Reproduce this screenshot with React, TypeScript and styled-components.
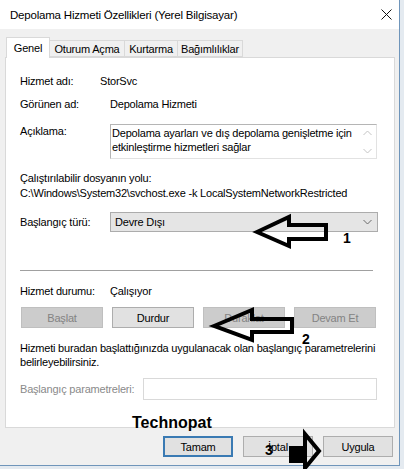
import React from "react";
import styled, { createGlobalStyle } from "styled-components";

const GlobalStyle = createGlobalStyle`
  html, body { margin: 0; padding: 0; background: #e4eaf0; }
  body {
    font-family: "Liberation Sans", Arial, sans-serif;
    font-size: 11px;
    letter-spacing: -0.2px;
    color: #000;
    white-space: nowrap;
  }
`;

const Stage = styled.div`
  position: relative;
  width: 404px;
  height: 469px;
  overflow: hidden;
`;

const Window = styled.div`
  width: 399px;
  height: 465px;
  background: #f0f0f0;
  border-right: 1px solid #6f95ba;
  border-bottom: 1px solid #6f95ba;
  display: flex;
  flex-direction: column;
`;

const TitleBar = styled.div`
  height: 29px;
  background: #fff;
  display: flex;
  align-items: center;
  justify-content: space-between;
  padding: 0 7px 0 10px;
`;

const Title = styled.span`
  font-size: 11.5px;
  margin-top: 1px;
`;

const Body = styled.div`
  padding: 8px 4px 0 5px;
  display: flex;
  flex-direction: column;
`;

const TabStrip = styled.div`
  display: flex;
  align-items: flex-end;
  height: 20px;
  margin-left: 1px;
  position: relative;
  z-index: 1;
`;

const Tab = styled.div<{ $w: number; $active?: boolean }>`
  width: ${(p) => p.$w}px;
  height: ${(p) => (p.$active ? 21 : 17)}px;
  margin-bottom: ${(p) => (p.$active ? -1 : 0)}px;
  box-sizing: border-box;
  border: 1px solid #d9d9d9;
  border-bottom: ${(p) => (p.$active ? "none" : "1px solid #d9d9d9")};
  margin-left: ${(p) => (p.$active ? 0 : -1)}px;
  background: ${(p) => (p.$active ? "#fff" : "#f0f0f0")};
  display: flex;
  justify-content: center;
  align-items: ${(p) => (p.$active ? "flex-start" : "center")};
  padding-top: ${(p) => (p.$active ? 3 : 0)}px;
  line-height: 14px;
`;

const Panel = styled.div`
  width: 390px;
  height: 371px;
  box-sizing: border-box;
  border: 1px solid #d9d9d9;
  background: #fff;
  padding: 13px 0 0 14px;
  display: flex;
  flex-direction: column;
`;

const Row = styled.div<{ $h: number; $mt: number }>`
  display: flex;
  align-items: center;
  height: ${(p) => p.$h}px;
  margin-top: ${(p) => p.$mt}px;
`;

const TopRow = styled.div<{ $mt: number }>`
  display: flex;
  align-items: flex-start;
  margin-top: ${(p) => p.$mt}px;
`;

const Label = styled.span<{ $w: number; $muted?: boolean; $pt?: number }>`
  width: ${(p) => p.$w}px;
  flex: none;
  color: ${(p) => (p.$muted ? "#8a8a8a" : "#000")};
  padding-top: ${(p) => p.$pt ?? 0}px;
  line-height: 14px;
`;

const Value = styled.span<{ $inset?: number }>`
  padding-left: ${(p) => p.$inset ?? 0}px;
`;

const DescBox = styled.div`
  width: 267px;
  height: 35px;
  box-sizing: border-box;
  border: 1px solid #e2e2e2;
  border-top-color: #b5b5b5;
  border-left-color: #b5b5b5;
  display: flex;
`;

const DescText = styled.div`
  flex: 1;
  padding: 1px 0 0 1px;
  line-height: 14px;
`;

const ScrollCol = styled.div`
  width: 17px;
  display: flex;
  flex-direction: column;
  justify-content: space-between;
  align-items: center;
  padding: 5px 0 4px;
`;

const Para = styled.div<{ $mt: number }>`
  margin-top: ${(p) => p.$mt}px;
  line-height: ${(p) => (p.$mt > 12 ? 14 : 15)}px;
`;

const Select = styled.div`
  width: 268px;
  height: 20px;
  box-sizing: border-box;
  background: #e5e5e5;
  border: 1px solid #acacac;
  display: flex;
  align-items: center;
  justify-content: space-between;
  padding: 0 5px 0 4px;
`;

const Separator = styled.div`
  width: 353px;
  height: 1px;
  background: #a0a0a0;
  margin-top: 38px;
`;

const ButtonGrid = styled.div`
  display: grid;
  grid-template-columns: repeat(4, 82px);
  column-gap: 9px;
  margin: 8px 0 0 1px;
`;

const Button = styled.div<{ $disabled?: boolean; $w?: number; $default?: boolean }>`
  height: 21px;
  width: ${(p) => (p.$w ? `${p.$w}px` : "auto")};
  box-sizing: border-box;
  display: flex;
  align-items: center;
  justify-content: center;
  background: ${(p) => (p.$disabled ? "#cccccc" : "#e1e1e1")};
  border: ${(p) =>
    p.$default ? "2px solid #3a7ab3" : p.$disabled ? "1px solid #bfbfbf" : "1px solid #adadad"};
  color: ${(p) => (p.$disabled ? "#838383" : "#000")};
`;

const Input = styled.div`
  width: 234px;
  height: 22px;
  box-sizing: border-box;
  border: 1px solid #d9d9d9;
  background: #fff;
`;

const Footer = styled.div`
  display: flex;
  justify-content: flex-end;
  gap: 10px;
  margin-top: 8px;
  padding-right: 2px;
`;

const Overlay = styled.svg`
  position: absolute;
  left: 0;
  top: 0;
  pointer-events: none;
`;

const Mark = styled.span<{ $x: number; $y: number; $size: number }>`
  position: absolute;
  left: ${(p) => p.$x}px;
  top: ${(p) => p.$y}px;
  font-family: "Liberation Sans", Arial, sans-serif;
  font-weight: bold;
  font-size: ${(p) => p.$size}px;
  letter-spacing: 0;
  line-height: 1;
  color: #000;
`;

const Chevron = ({ up }: { up?: boolean }) => (
  <svg width="9" height="6" viewBox="0 0 9 6">
    <path
      d={up ? "M0.5 5 L4.5 1 L8.5 5" : "M0.5 1 L4.5 5 L8.5 1"}
      fill="none"
      stroke="#c4c4c4"
      strokeWidth="1"
    />
  </svg>
);

export default function App() {
  return (
    <>
      <GlobalStyle />
      <Stage>
        <Window>
          <TitleBar>
            <Title>Depolama Hizmeti Özellikleri (Yerel Bilgisayar)</Title>
            <svg width="11" height="11" viewBox="0 0 11 11">
              <path d="M0.5 0.5 L10.5 10.5 M10.5 0.5 L0.5 10.5" stroke="#111" strokeWidth="1" />
            </svg>
          </TitleBar>
          <Body>
            <TabStrip>
              <Tab $w={44} $active>Genel</Tab>
              <Tab $w={76}>Oturum Açma</Tab>
              <Tab $w={54}>Kurtarma</Tab>
              <Tab $w={66}>Bağımlılıklar</Tab>
            </TabStrip>
            <Panel>
              <Row $h={20} $mt={0}>
                <Label $w={80}>Hizmet adı:</Label>
                <Value>StorSvc</Value>
              </Row>
              <Row $h={20} $mt={3}>
                <Label $w={80}>Görünen ad:</Label>
                <Value $inset={10}>Depolama Hizmeti</Value>
              </Row>
              <TopRow $mt={10}>
                <Label $w={90} $pt={0}>Açıklama:</Label>
                <DescBox>
                  <DescText>
                    Depolama ayarları ve dış depolama genişletme için
                    <br />
                    etkinleştirme hizmetleri sağlar
                  </DescText>
                  <ScrollCol>
                    <Chevron up />
                    <Chevron />
                  </ScrollCol>
                </DescBox>
              </TopRow>
              <Para $mt={12}>
                Çalıştırılabilir dosyanın yolu:
                <br />
                C:\Windows\System32\svchost.exe -k LocalSystemNetworkRestricted
              </Para>
              <Row $h={20} $mt={11}>
                <Label $w={90}>Başlangıç türü:</Label>
                <Select>
                  <span>Devre Dışı</span>
                  <svg width="9" height="6" viewBox="0 0 9 6">
                    <path d="M0.5 1 L4.5 5 L8.5 1" fill="none" stroke="#6a6a6a" strokeWidth="1" />
                  </svg>
                </Select>
              </Row>
              <Separator />
              <Row $h={16} $mt={12}>
                <Label $w={90}>Hizmet durumu:</Label>
                <Value>Çalışıyor</Value>
              </Row>
              <ButtonGrid>
                <Button $disabled>Başlat</Button>
                <Button>Durdur</Button>
                <Button $disabled>Duraklat</Button>
                <Button $disabled>Devam Et</Button>
              </ButtonGrid>
              <Para $mt={13}>
                Hizmeti buradan başlattığınızda uygulanacak olan başlangıç parametrelerini
                <br />
                belirleyebilirsiniz.
              </Para>
              <Row $h={22} $mt={9}>
                <Label $w={123} $muted>Başlangıç parametreleri:</Label>
                <Input />
              </Row>
            </Panel>
            <Footer>
              <Button $w={70} $default>Tamam</Button>
              <Button $w={70}>İptal</Button>
              <Button $w={70}>Uygula</Button>
            </Footer>
          </Body>
        </Window>

        <Overlay width="404" height="469" viewBox="0 0 404 469">
          <polygon
            points="257,232 289,217 289,225 326,225 326,239 289,239 289,246"
            fill="none"
            stroke="#000"
            strokeWidth="4"
            strokeLinejoin="miter"
          />
          <polygon
            points="214,326 252,310 252,319 292,319 292,332 252,332 252,340"
            fill="none"
            stroke="#000"
            strokeWidth="4"
            strokeLinejoin="miter"
          />
          <rect x="289" y="446" width="16" height="17" fill="#000" />
          <polygon
            points="305,434 319,451 305,468"
            fill="none"
            stroke="#000"
            strokeWidth="4"
          />
        </Overlay>
        <Mark $x={132} $y={415} $size={16}>Technopat</Mark>
        <Mark $x={343} $y={231} $size={14}>1</Mark>
        <Mark $x={302} $y={332} $size={14}>2</Mark>
        <Mark $x={265} $y={443} $size={14}>3</Mark>
      </Stage>
    </>
  );
}
